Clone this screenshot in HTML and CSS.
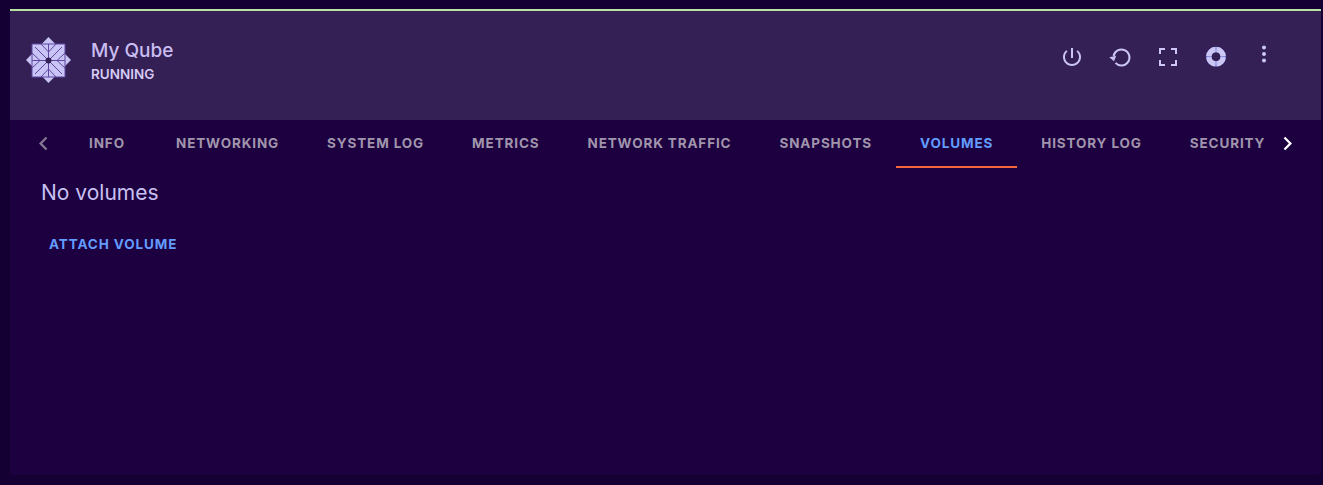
FILE: index.html
```html
<!DOCTYPE html>
<html lang="en">
<head>
<meta charset="utf-8">
<title>My Qube</title>
<link rel="stylesheet" href="styles.css">
</head>
<body>
<main class="card">
  <header class="head">
    <svg class="logo" viewBox="0 0 46 46" aria-hidden="true">
      <rect class="logo-sq" x="6" y="7" width="33" height="33"/>
      <polygon class="logo-sq" points="22.5,0 45,23 22.5,46 0,23"/>
      <g class="logo-line">
        <path d="M6 7H39V40H6Z"/>
        <path d="M22.5 7V40M6 23.5H39"/>
        <path d="M9 10L36 37M36 10L9 37"/>
        <path d="M15 7L22.5 15L30 7M15 40L22.5 32L30 40M6 16L14 23.5L6 31M39 16L31 23.5L39 31"/>
      </g>
      <circle class="logo-hub" cx="22.5" cy="23.5" r="3"/>
    </svg>
    <div class="title">
      <h1>My Qube</h1>
      <p>RUNNING</p>
    </div>
    <div class="actions">
      <button class="act"><svg viewBox="0 0 24 24"><path d="M13 3h-2v10h2V3zm4.83 2.17l-1.42 1.42C17.99 7.86 19 9.81 19 12c0 3.87-3.13 7-7 7s-7-3.13-7-7c0-2.19 1.01-4.14 2.58-5.42L6.17 5.17C4.23 6.82 3 9.26 3 12c0 4.97 4.03 9 9 9s9-4.03 9-9c0-2.74-1.23-5.18-3.17-6.83z"/></svg></button>
      <button class="act"><svg viewBox="0 0 24 24"><path class="arc" d="M5.6 11A8 8 0 1 1 7.5 17.8"/><path d="M1.3 12.3 L8.2 10.8 L6 16.2Z"/></svg></button>
      <button class="act"><svg viewBox="0 0 24 24"><path d="M3 3h6v2H5v4H3V3zm12 0h6v6h-2V5h-4V3zM3 15h2v4h4v2H3v-6zm16 0h2v6h-6v-2h4v-4z"/></svg></button>
      <button class="act"><svg viewBox="0 0 24 24"><circle class="ring ring-under" cx="12" cy="11.7" r="7.2"/><circle class="ring" cx="12" cy="11.7" r="7.2" pathLength="100" stroke-dasharray="22.8 2.2" stroke-dashoffset="-1.1"/></svg></button>
      <button class="act act-up"><svg viewBox="0 0 24 24"><circle cx="12" cy="5.5" r="2"/><circle cx="12" cy="12" r="2"/><circle cx="12" cy="18.5" r="2"/></svg></button>
    </div>
  </header>
  <nav class="tabs">
    <button class="chev chev-off"><svg viewBox="0 0 24 24"><path d="M15.4 7.4 14 6l-6 6 6 6 1.4-1.4L10.8 12z"/></svg></button>
    <div class="tablist">
      <a class="tab">INFO</a>
      <a class="tab">NETWORKING</a>
      <a class="tab">SYSTEM LOG</a>
      <a class="tab">METRICS</a>
      <a class="tab">NETWORK TRAFFIC</a>
      <a class="tab">SNAPSHOTS</a>
      <a class="tab tab-on">VOLUMES</a>
      <a class="tab">HISTORY LOG</a>
      <a class="tab">SECURITY</a>
    </div>
    <button class="chev"><svg viewBox="0 0 24 24"><path d="M10 6 8.6 7.4 13.2 12l-4.6 4.6L10 18l6-6z"/></svg></button>
  </nav>
  <section class="body">
    <p class="empty">No volumes</p>
    <button class="link">ATTACH VOLUME</button>
  </section>
</main>
</body>
</html>
```
FILE: styles.css
```css
* { box-sizing: border-box; }
html, body { height: 100%; }
body {
  margin: 0;
  padding: 9px 2px 10px 10px;
  background: #140033;
  font-family: Inter, "Liberation Sans", sans-serif;
  overflow: hidden;
}
button { font: inherit; background: none; border: 0; padding: 0; cursor: pointer; }
.card {
  height: 100%;
  background: #1d0040;
  border-top: 2px solid #b7e2a3;
  border-radius: 0 0 4px 4px;
  overflow: hidden;
}
.head {
  height: 109px;
  background: #342054;
  display: flex;
  align-items: flex-start;
  padding: 26px 33px 0 16px;
}
.logo { width: 46px; height: 46px; flex: none; }
.logo-sq { fill: #c8c4f5; }
.logo-line { fill: none; stroke: #5f46a0; stroke-width: 1; }
.logo-hub { fill: #342054; }
.title { margin-left: 19px; color: #c9bdf2; padding-top: 3px; }
.title h1 { margin: 0; font-size: 19px; line-height: 22px; font-weight: 500; }
.title p { margin: 3px 0 0; font-size: 13.5px; line-height: 18px; font-weight: 600; color: #d6ccf6; }
.actions { margin-left: auto; display: flex; padding-top: 8px; }
.act { width: 48px; height: 24px; display: flex; justify-content: center; }
.act svg { width: 24px; height: 24px; fill: #ccc6f5; }
.act-up { margin-top: -3px; }
.arc { fill: none; stroke: #ccc6f5; stroke-width: 2; }
.ring { fill: none; stroke: #ccc6f5; stroke-width: 5.4; }
.ring-under { stroke: #6f7fe0; }
.tabs { height: 48px; display: flex; padding: 0 14px 0 12px; }
.chev { width: 40px; height: 46px; flex: none; display: flex; align-items: center; justify-content: center; }
.chev svg { width: 27px; height: 27px; fill: #fff; }
.chev-off { padding-left: 2px; }
.chev-off svg { fill: #857a92; }
.tablist { flex: 1; min-width: 0; display: flex; overflow: hidden; }
.tab {
  flex: none;
  min-width: 90px;
  height: 48px;
  padding: 15px 24px 0;
  font-size: 13.5px;
  line-height: 16px;
  font-weight: 700;
  letter-spacing: 0.87px;
  text-align: center;
  color: #a095ac;
  border-bottom: 2px solid transparent;
}
.tab-on { color: #639cff; border-bottom-color: #f2683a; }
.body { padding: 13px 31px; }
.empty { margin: 0; font-size: 21px; line-height: 24px; color: #c9c0f2; }
.link {
  display: block;
  margin: 29px 0 0 8px;
  font-size: 13.5px;
  line-height: 20px;
  font-weight: 700;
  letter-spacing: 0.9px;
  color: #639cff;
}
```
